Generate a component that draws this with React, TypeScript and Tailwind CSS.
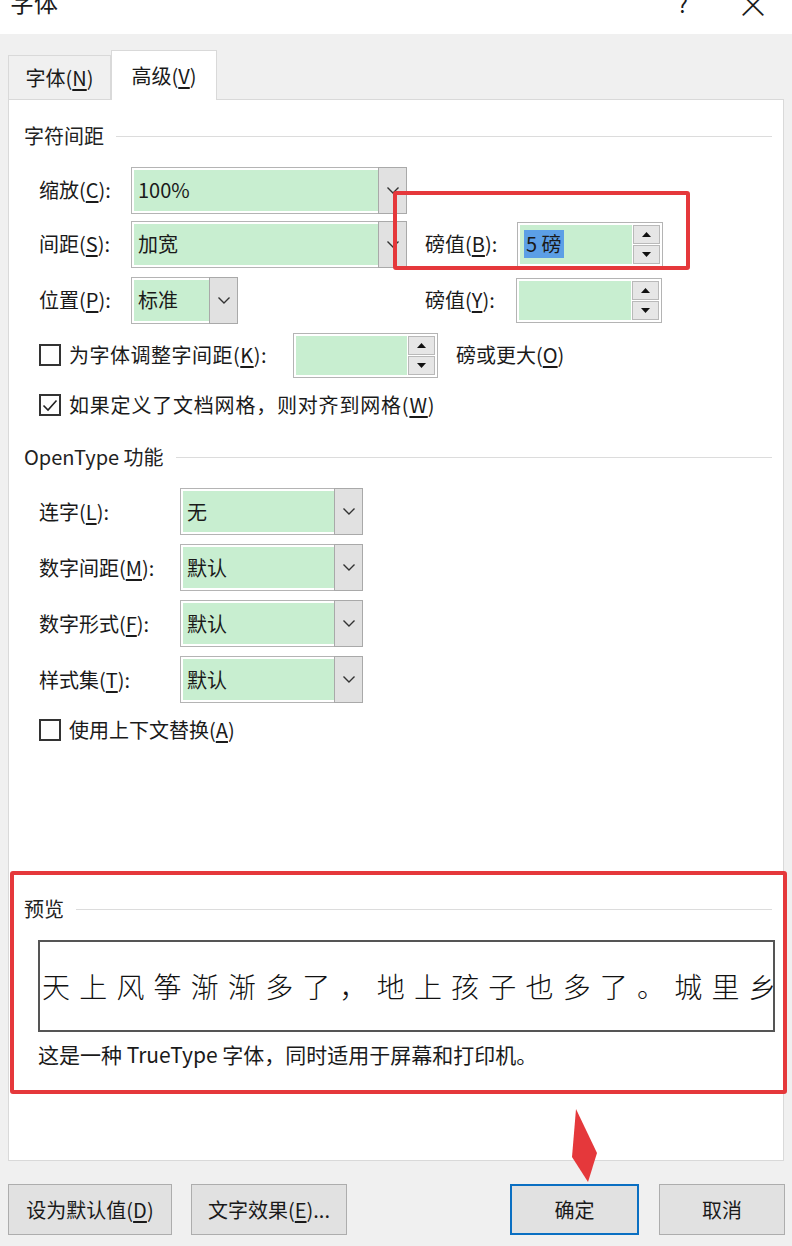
import type { ReactNode } from 'react'

const font = "font-['Noto_Sans_CJK_SC','Noto_Sans',sans-serif]"

function Chevron() {
  return (
    <svg width="14" height="9" viewBox="0 0 14 9">
      <polyline points="1.5,1.5 7,7 12.5,1.5" fill="none" stroke="#333" strokeWidth="1.4" />
    </svg>
  )
}

function Combo({ value, width }: { value?: string; width: string }) {
  return (
    <div className={`${width} h-[47px] flex border border-[#b4b4b4] bg-white p-[2px]`}>
      <div className="flex-1 bg-[#c8eed0] flex items-center pl-[4px] text-[20px] text-[#1a1a1a]">{value}</div>
      <div className="w-[29px] -my-[3px] -mr-[3px] border border-[#a9a9a9] bg-[#e1e1e1] flex items-center justify-center">
        <Chevron />
      </div>
    </div>
  )
}

function Spin({ children, width = 'w-[146px]' }: { children?: ReactNode; width?: string }) {
  return (
    <div className={`${width} h-[45px] flex border border-[#b4b4b4] bg-white p-[2px]`}>
      <div className="flex-1 bg-[#c8eed0] flex items-center pl-[4px] text-[20px] text-[#1a1a1a]">{children}</div>
      <div className="w-[27px] flex flex-col gap-[1px] ml-[1px]">
        <div className="flex-1 border border-[#b9b9b9] bg-[#e6e6e6] flex items-center justify-center">
          <svg width="9" height="5" viewBox="0 0 9 5">
            <polygon points="0,5 4.5,0 9,5" fill="#111" />
          </svg>
        </div>
        <div className="flex-1 border border-[#b9b9b9] bg-[#e6e6e6] flex items-center justify-center">
          <svg width="9" height="5" viewBox="0 0 9 5">
            <polygon points="0,0 4.5,5 9,0" fill="#111" />
          </svg>
        </div>
      </div>
    </div>
  )
}

function Box({ checked }: { checked?: boolean }) {
  return (
    <div className="w-[22px] h-[22px] border-2 border-[#333] bg-white flex items-center justify-center">
      {checked && (
        <svg width="16" height="13" viewBox="0 0 16 13">
          <polyline points="1.5,6.5 6,11 14.5,1.5" fill="none" stroke="#222" strokeWidth="1.6" />
        </svg>
      )}
    </div>
  )
}

function Label({ text, k, tail = '):' }: { text: string; k: string; tail?: string }) {
  return (
    <span>
      {text}(<span className="underline underline-offset-[3px]">{k}</span>
      {tail}
    </span>
  )
}

function Heading({ children, className = '' }: { children: ReactNode; className?: string }) {
  return (
    <div className={`flex items-center gap-[12px] h-[24px] ${className}`}>
      <span className="text-[20px] text-[#222] whitespace-nowrap">{children}</span>
      <div className="flex-1 h-px bg-[#dcdcdc]" />
    </div>
  )
}

function Btn({ children, width, primary }: { children: ReactNode; width: string; primary?: boolean }) {
  return (
    <div
      className={`${width} h-[51px] flex items-center justify-center text-[20px] text-[#1a1a1a] bg-[#e1e1e1] ${
        primary ? 'border-2 border-[#0a6fc2]' : 'border border-[#adadad]'
      }`}
    >
      {children}
    </div>
  )
}

const preview = '天上风筝渐渐多了，地上孩子也多了。城里乡'

export default function App() {
  return (
    <div className={`relative w-[792px] h-[1246px] overflow-hidden bg-[#f0f0f0] ${font} text-[#1a1a1a]`}>
      {/* title bar, top cut off */}
      <div className="h-[34px] bg-white flex items-start overflow-hidden">
        <span className="ml-[10px] -mt-[16px] text-[24px]">字体</span>
        <span className="ml-auto -mt-[13px] text-[22px]">?</span>
        <span className="ml-[48px] mr-[22px] -mt-[22px] text-[34px] font-light">×</span>
      </div>

      {/* tabs */}
      <div className="flex items-end pl-[8px] pt-[16px]">
        <div className="w-[103px] h-[44px] border border-b-0 border-[#d9d9d9] bg-[#f0f0f0] flex items-center justify-center text-[20px]">
          <Label text="字体" k="N" tail=")" />
        </div>
        <div className="w-[106px] h-[50px] -mb-px z-10 border border-b-0 border-[#d9d9d9] bg-white flex items-center justify-center text-[20px]">
          <Label text="高级" k="V" tail=")" />
        </div>
      </div>

      {/* panel */}
      <div className="mx-[8px] h-[1062px] bg-white border border-[#d9d9d9] pl-[15px] pr-[11px] pt-[24px] text-[20px]">
        <Heading>字符间距</Heading>

        <div className="pl-[15px]">
          <div className="mt-[19px] flex items-center h-[46px]">
            <div className="w-[92px]"><Label text="缩放" k="C" /></div>
            <Combo value="100%" width="w-[276px]" />
          </div>

          <div className="mt-[8px] flex items-center h-[46px]">
            <div className="w-[92px]"><Label text="间距" k="S" /></div>
            <Combo value="加宽" width="w-[276px]" />
            <div className="ml-[18px] w-[92px]"><Label text="磅值" k="B" /></div>
            <Spin>
              <span className="bg-[#5c9fe6] px-[2px] leading-[28px]">5 磅</span>
            </Spin>
          </div>

          <div className="mt-[10px] flex items-center h-[46px]">
            <div className="w-[92px]"><Label text="位置" k="P" /></div>
            <Combo value="标准" width="w-[107px]" />
            <div className="ml-[187px] w-[91px]"><Label text="磅值" k="Y" /></div>
            <Spin />
          </div>

          <div className="mt-[10px] flex items-center h-[44px]">
            <Box />
            <span className="ml-[8px] w-[224px] tracking-[0.5px]"><Label text="为字体调整字间距" k="K" /></span>
            <Spin width="w-[145px]" />
            <span className="ml-[18px]"><Label text="磅或更大" k="O" tail=")" /></span>
          </div>

          <div className="mt-[16px] flex items-center h-[24px]">
            <Box checked />
            <span className="ml-[8px] tracking-[0.8px]"><Label text="如果定义了文档网格，则对齐到网格" k="W" tail=")" /></span>
          </div>
        </div>

        <Heading className="mt-[28px]">OpenType 功能</Heading>

        <div className="pl-[15px]">
          {[
            ['连字', 'L', '无'],
            ['数字间距', 'M', '默认'],
            ['数字形式', 'F', '默认'],
            ['样式集', 'T', '默认'],
          ].map(([t, k, v], i) => (
            <div key={k} className={`${i === 0 ? 'mt-[19px]' : 'mt-[9px]'} flex items-center h-[47px]`}>
              <div className="w-[141px]"><Label text={t} k={k} /></div>
              <Combo value={v} width="w-[183px]" />
            </div>
          ))}

          <div className="mt-[15px] flex items-center h-[24px]">
            <Box />
            <span className="ml-[8px]"><Label text="使用上下文替换" k="A" tail=")" /></span>
          </div>
        </div>

        <Heading className="mt-[155px]">预览</Heading>

        <div className="mt-[19px] ml-[14px] mr-[-3px] h-[92px] border-2 border-[#555] flex items-center overflow-hidden pl-[2px]">
          <div className="flex gap-[9.2px] text-[28px] font-light text-[#111] whitespace-nowrap">
            {preview.split('').map((c, i) => (
              <span key={i} className="w-[28px] shrink-0 text-center">{c}</span>
            ))}
          </div>
        </div>

        <div className="mt-[11px] ml-[14px] h-[24px] flex items-center text-[21px]">
          这是一种 TrueType 字体，同时适用于屏幕和打印机。
        </div>
      </div>

      {/* buttons */}
      <div className="flex mt-[23px] pl-[8px]">
        <Btn width="w-[164px]"><Label text="设为默认值" k="D" tail=")" /></Btn>
        <Btn width="w-[156px] ml-[19px]"><span>文字效果(<span className="underline underline-offset-[3px]">E</span>)...</span></Btn>
        <Btn width="w-[129px] ml-[163px]" primary>确定</Btn>
        <Btn width="w-[126px] ml-[20px]">取消</Btn>
      </div>

      {/* annotations */}
      <div className="absolute left-[393px] top-[191px] w-[297px] h-[79px] border-4 border-[#e5383b] rounded-[3px]" />
      <div className="absolute left-[10px] top-[871px] w-[777px] h-[223px] border-4 border-[#e5383b] rounded-[3px]" />
      <svg className="absolute left-[565px] top-[1105px]" width="40" height="80" viewBox="565 1105 40 80">
        <polygon points="576,1109 597,1153 588,1182 572,1157" fill="#e5383b" />
      </svg>
    </div>
  )
}
